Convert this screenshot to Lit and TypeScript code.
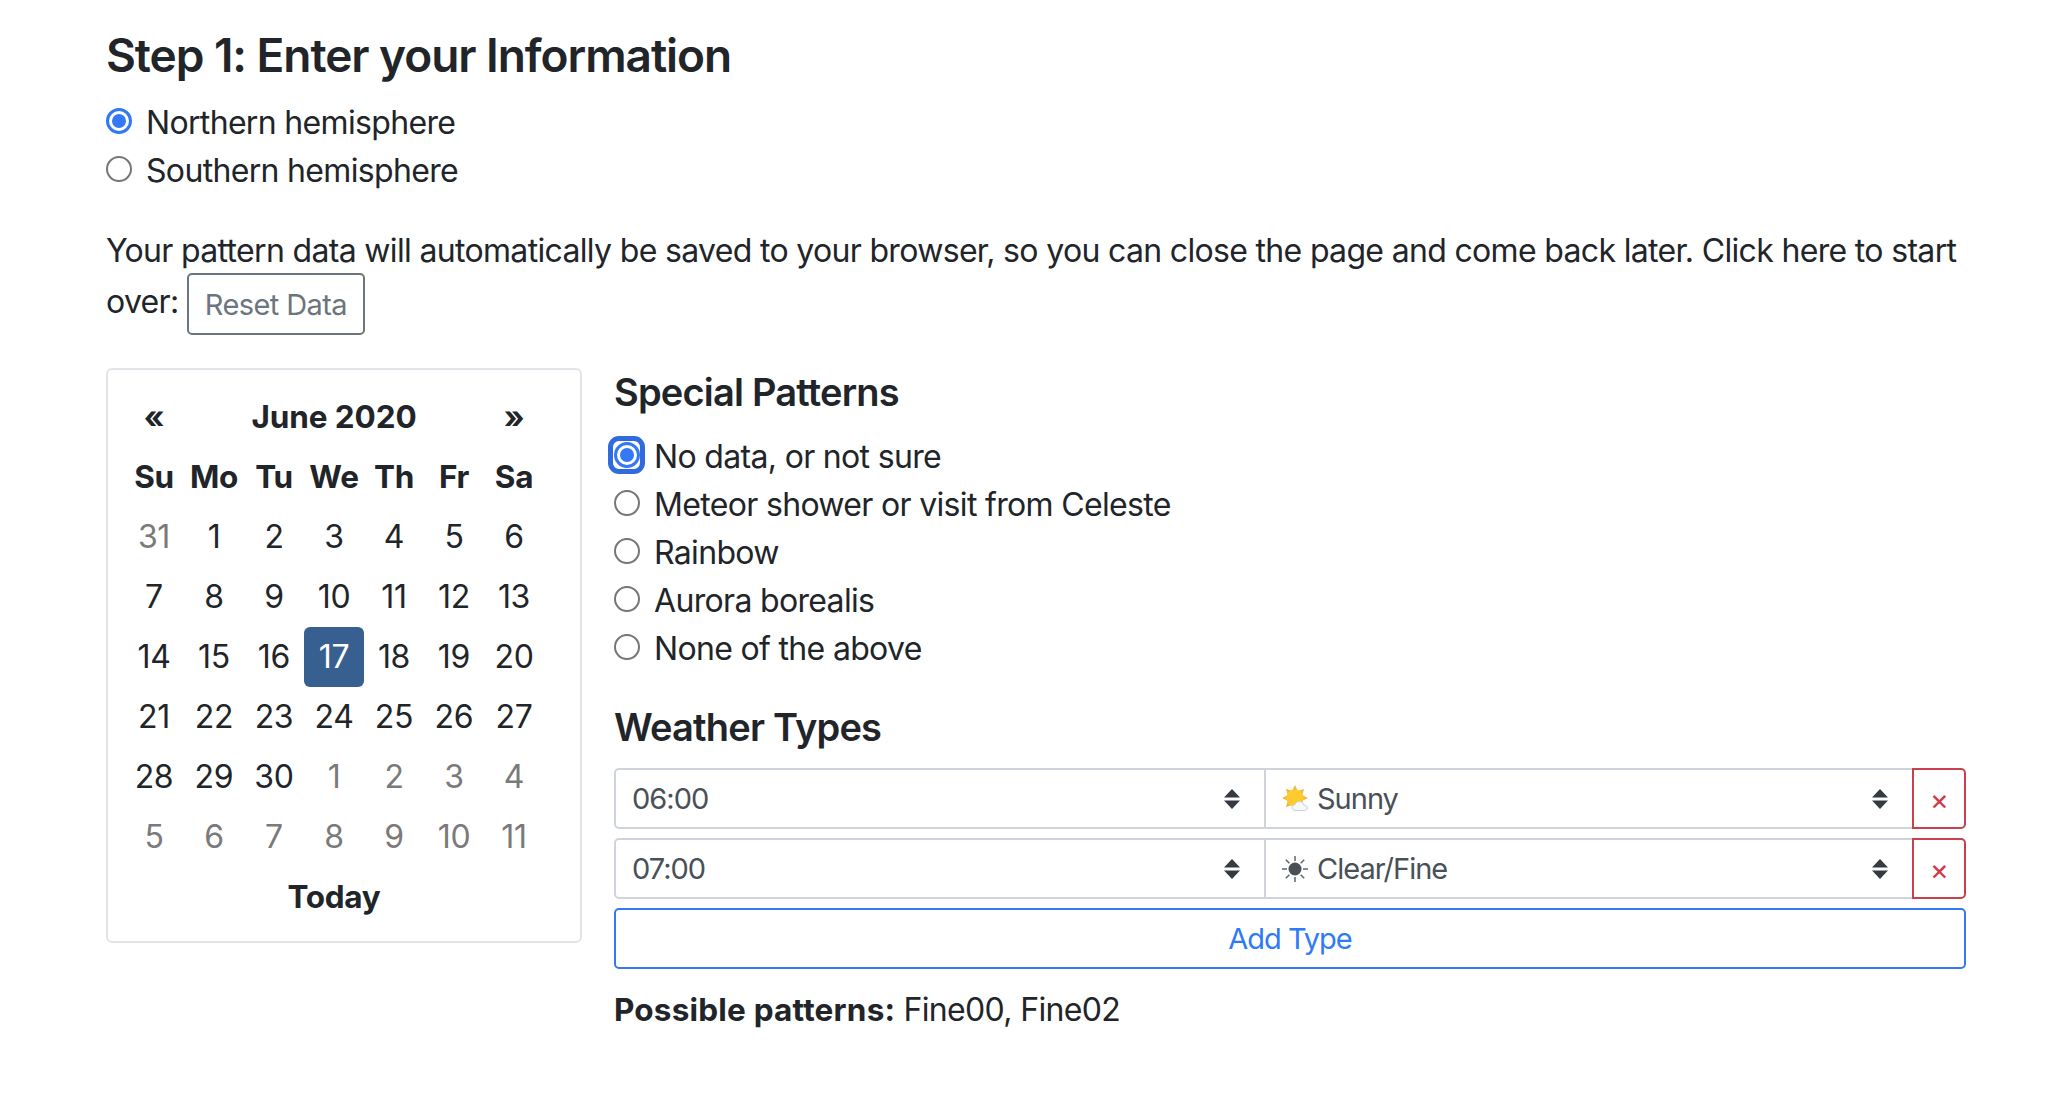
import { LitElement, html, css, svg } from "lit";
import { customElement } from "lit/decorators.js";

const weeks: [string, boolean][][] = [
  ["31", "1", "2", "3", "4", "5", "6"],
  ["7", "8", "9", "10", "11", "12", "13"],
  ["14", "15", "16", "17", "18", "19", "20"],
  ["21", "22", "23", "24", "25", "26", "27"],
  ["28", "29", "30", "1", "2", "3", "4"],
  ["5", "6", "7", "8", "9", "10", "11"],
].map((w, r) =>
  w.map((d, c) => [d, (r === 0 && c === 0) || (r === 4 && c > 2) || r === 5] as [string, boolean])
);

const arrows = html`<svg class="arrows" width="16" height="20" viewBox="0 0 16 20"><path d="M8 0l8 8.500H0z M8 20l8-8.500H0z" fill="#343a40"/></svg>`;

const sunny = html`<svg class="ico" width="28" height="28" viewBox="0 0 28 28">
  ${[0, 45, 90, 135, 180, 225, 270, 315].map(
    (a) => svg`<path d="M13 0l3 6h-6z" fill="#f8b640" transform="rotate(${a} 13 13)"/>`
  )}
  <circle cx="13" cy="13" r="8.500" fill="#fdcb2e"/>
  <path d="M14 25.500c-2.600 0-4-1.500-4-3 0-1.700 1.300-2.800 3-2.800 .7-2.100 2.400-3.200 4.300-3.200 2.400 0 4.200 1.500 4.500 3.600 2 .1 3.700 1.100 3.700 2.900 0 1.600-1.400 2.500-3 2.500z" fill="#f6f8fa" stroke="#c5d0da" stroke-width="1"/>
</svg>`;

const clear = html`<svg class="ico" width="28" height="28" viewBox="0 0 28 28">
  <circle cx="13" cy="14" r="6.500" fill="#495057"/>
  ${[0, 45, 90, 135, 180, 225, 270, 315].map(
    (a) => svg`<path d="M13 1v5" stroke="#5d656d" stroke-width="1.500" transform="rotate(${a} 13 14)"/>`
  )}
</svg>`;

@customElement("app-root")
export class AppRoot extends LitElement {
  static styles = css`
    :host {
      display: block;
      font-family: Inter, "Liberation Sans", sans-serif;
      font-size: 32px;
      line-height: 48px;
      color: #212529;
      letter-spacing: -0.67px;
    }
    .page {
      box-sizing: border-box;
      width: 2058px;
      height: 1120px;
      background: #fff;
      padding: 21px 92px 0 106px;
    }
    h1 {
      margin: 0 0 9px;
      font-size: 46px;
      line-height: 68px;
      font-weight: 600;
      letter-spacing: -1.05px;
    }
    h2 {
      margin: 0;
      font-size: 38px;
      line-height: 48px;
      font-weight: 600;
      letter-spacing: -0.8px;
    }
    .radio-row {
      display: flex;
      align-items: center;
      height: 48px;
      padding-top: 1px;
      box-sizing: border-box;
      white-space: nowrap;
    }
    .radio {
      position: relative;
      box-sizing: border-box;
      flex: none;
      width: 26px;
      height: 26px;
      margin: -4px 14px 0 0;
      border: 2px solid #767676;
      border-radius: 50%;
      background: #fff;
    }
    .radio.on {
      border: 3px solid #3478f6;
    }
    .radio.on::after {
      content: "";
      position: absolute;
      inset: 3px;
      border-radius: 50%;
      background: #3478f6;
    }
    .radio.focus::before {
      content: "";
      position: absolute;
      top: -9px;
      left: -9px;
      right: -8px;
      bottom: -9px;
      border: 5px solid #2f6bdc;
      border-radius: 11px;
    }
    p {
      margin: 33px 0 0;
    }
    .reset {
      display: inline-block;
      box-sizing: border-box;
      height: 62px;
      margin-top: -2px;
      padding: 0 16px;
      border: 2px solid #6c757d;
      border-radius: 5px;
      font-size: 29px;
      line-height: 60px;
      color: #6c757d;
      vertical-align: -2px;
      letter-spacing: -0.6px;
    }
    .main {
      display: flex;
      gap: 32px;
      margin-top: 33px;
    }
    .card {
      box-sizing: border-box;
      flex: none;
      width: 476px;
      height: 575px;
      padding: 17px 16px 0;
      border: 2px solid #e1e4e8;
      border-radius: 6px;
      letter-spacing: -0.3px;
    }
    .cal {
      display: grid;
      grid-template-columns: repeat(7, 60px);
      grid-auto-rows: 60px;
      align-items: center;
      justify-items: center;
      text-align: center;
    }
    .cal div {
      width: 100%;
      line-height: 60px;
    }
    .b {
      font-weight: 700;
      font-size: 31.500px;
    }
    .title {
      grid-column: span 5;
      letter-spacing: -0.1px;
    }
    .today {
      grid-column: span 7;
    }
    .mute {
      color: #7a7a7a;
    }
    .sel {
      background: #376090;
      color: #fff;
      border-radius: 6px;
    }
    .right {
      flex: 1;
      min-width: 0;
    }
    .patterns {
      margin-top: 16px;
    }
    .weather {
      margin: 31px 0 17px;
    }
    .types {
      display: flex;
      flex-direction: column;
      gap: 9px;
    }
    .type {
      display: flex;
      height: 61px;
    }
    .field {
      box-sizing: border-box;
      display: flex;
      align-items: center;
      height: 61px;
      border: 2px solid #ced4da;
      color: #495057;
      font-size: 29px;
      letter-spacing: -1px;
      line-height: 1;
    }
    .time {
      width: 652px;
      padding: 0 24px 0 16px;
      border-radius: 5px 0 0 5px;
    }
    .kind {
      flex: 1;
      margin-left: -2px;
      padding: 0 24px 0 16px;
    }
    .field span {
      flex: 1;
    }
    .ico {
      flex: none;
      margin-right: 7px;
    }
    .arrows {
      flex: none;
    }
    .del {
      box-sizing: border-box;
      flex: none;
      display: flex;
      align-items: center;
      justify-content: center;
      width: 54px;
      height: 61px;
      margin-left: -2px;
      border: 2px solid #c8404c;
      border-radius: 0 5px 5px 0;
      color: #cf3a47;
      font-size: 29px;
      line-height: 1;
      padding-top: 1px;
    }
    .add {
      box-sizing: border-box;
      height: 61px;
      border: 2px solid #3478f6;
      border-radius: 5px;
      color: #2f7bf6;
      font-size: 29px;
      letter-spacing: -1px;
      line-height: 57px;
      text-align: center;
    }
    .possible {
      margin-top: 17px;
    }
    .possible b {
      font-weight: 700;
      font-size: 31.500px;
      letter-spacing: 0.2px;
    }
  `;

  private radio(label: string, cls = "") {
    return html`<div class="radio-row"><span class="radio ${cls}"></span>${label}</div>`;
  }

  private typeRow(time: string, icon: unknown, label: string) {
    return html`<div class="type">
      <div class="field time"><span>${time}</span>${arrows}</div>
      <div class="field kind">${icon}<span>${label}</span>${arrows}</div>
      <div class="del">×</div>
    </div>`;
  }

  render() {
    return html`<div class="page">
      <h1>Step 1: Enter your Information</h1>
      ${this.radio("Northern hemisphere", "on")} ${this.radio("Southern hemisphere")}
      <p>
        <span>Your pattern data will automatically be saved to your browser, so you can close the page and come back later. Click here to start</span>
        <span>over:</span> <span class="reset">Reset Data</span>
      </p>
      <div class="main">
        <div class="card">
          <div class="cal">
            <div class="b">«</div>
            <div class="b title">June 2020</div>
            <div class="b">»</div>
            ${["Su", "Mo", "Tu", "We", "Th", "Fr", "Sa"].map((d) => html`<div class="b">${d}</div>`)}
            ${weeks.flat().map(
              ([d, m], i) =>
                html`<div class="${m ? "mute" : ""} ${i === 17 ? "sel" : ""}">${d}</div>`
            )}
            <div class="b today">Today</div>
          </div>
        </div>
        <div class="right">
          <h2>Special Patterns</h2>
          <div class="patterns">
            ${this.radio("No data, or not sure", "on focus")}
            ${this.radio("Meteor shower or visit from Celeste")} ${this.radio("Rainbow")}
            ${this.radio("Aurora borealis")} ${this.radio("None of the above")}
          </div>
          <h2 class="weather">Weather Types</h2>
          <div class="types">
            ${this.typeRow("06:00", sunny, "Sunny")} ${this.typeRow("07:00", clear, "Clear/Fine")}
            <div class="add">Add Type</div>
          </div>
          <div class="possible"><b>Possible patterns:</b> Fine00, Fine02</div>
        </div>
      </div>
    </div>`;
  }
}
